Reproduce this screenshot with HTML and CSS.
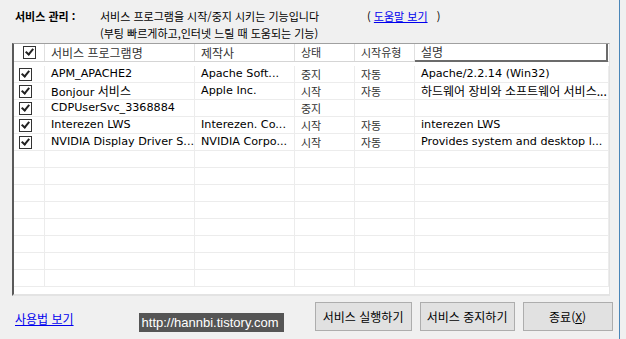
FILE: index.html
```html
<!DOCTYPE html>
<html lang="ko">
<head>
  <meta charset="UTF-8" />
  <title>서비스 관리</title>
  <link rel="stylesheet" href="styles.css">
</head>
<body>
  <div class="app">
    <div class="intro">
      <div class="title">서비스 관리 :</div>
      <div class="desc">
        <div class="desc-line">
          <span>서비스 프로그램을 시작/중지 시키는 기능입니다</span>
          <span class="help">( <a href="#">도움말 보기</a> &nbsp;&nbsp;)</span>
        </div>
        <div class="desc-line">(부팅 빠르게하고,인터넷 느릴 때 도움되는 기능)</div>
      </div>
    </div>

    <div class="list">
      <div class="list-head">
        <div class="cell c-check"><span class="box on"></span></div>
        <div class="cell c-name">서비스 프로그램명</div>
        <div class="cell c-maker">제작사</div>
        <div class="cell c-state">상태</div>
        <div class="cell c-type">시작유형</div>
        <div class="cell c-desc">설명</div>
      </div>
      <div class="list-body">
        <div class="row">
          <div class="cell c-check"><span class="box on"></span></div>
          <div class="cell c-name">APM_APACHE2</div>
          <div class="cell c-maker">Apache Soft...</div>
          <div class="cell c-state">중지</div>
          <div class="cell c-type">자동</div>
          <div class="cell c-desc">Apache/2.2.14 (Win32)</div>
        </div>
        <div class="row">
          <div class="cell c-check"><span class="box on"></span></div>
          <div class="cell c-name">Bonjour <span class="ko">서비스</span></div>
          <div class="cell c-maker">Apple Inc.</div>
          <div class="cell c-state">시작</div>
          <div class="cell c-type">자동</div>
          <div class="cell c-desc ko">하드웨어 장비와 소프트웨어 서비스...</div>
        </div>
        <div class="row">
          <div class="cell c-check"><span class="box on"></span></div>
          <div class="cell c-name">CDPUserSvc_3368884</div>
          <div class="cell c-maker"></div>
          <div class="cell c-state">중지</div>
          <div class="cell c-type"></div>
          <div class="cell c-desc"></div>
        </div>
        <div class="row">
          <div class="cell c-check"><span class="box on"></span></div>
          <div class="cell c-name">Interezen LWS</div>
          <div class="cell c-maker">Interezen. Co...</div>
          <div class="cell c-state">시작</div>
          <div class="cell c-type">자동</div>
          <div class="cell c-desc">interezen LWS</div>
        </div>
        <div class="row">
          <div class="cell c-check"><span class="box on"></span></div>
          <div class="cell c-name">NVIDIA Display Driver S...</div>
          <div class="cell c-maker">NVIDIA Corpo...</div>
          <div class="cell c-state">시작</div>
          <div class="cell c-type">자동</div>
          <div class="cell c-desc">Provides system and desktop l...</div>
        </div>
        <div class="row"><div class="cell c-check"></div><div class="cell c-name"></div><div class="cell c-maker"></div><div class="cell c-state"></div><div class="cell c-type"></div><div class="cell c-desc"></div></div>
        <div class="row"><div class="cell c-check"></div><div class="cell c-name"></div><div class="cell c-maker"></div><div class="cell c-state"></div><div class="cell c-type"></div><div class="cell c-desc"></div></div>
        <div class="row"><div class="cell c-check"></div><div class="cell c-name"></div><div class="cell c-maker"></div><div class="cell c-state"></div><div class="cell c-type"></div><div class="cell c-desc"></div></div>
        <div class="row"><div class="cell c-check"></div><div class="cell c-name"></div><div class="cell c-maker"></div><div class="cell c-state"></div><div class="cell c-type"></div><div class="cell c-desc"></div></div>
        <div class="row"><div class="cell c-check"></div><div class="cell c-name"></div><div class="cell c-maker"></div><div class="cell c-state"></div><div class="cell c-type"></div><div class="cell c-desc"></div></div>
        <div class="row"><div class="cell c-check"></div><div class="cell c-name"></div><div class="cell c-maker"></div><div class="cell c-state"></div><div class="cell c-type"></div><div class="cell c-desc"></div></div>
        <div class="row"><div class="cell c-check"></div><div class="cell c-name"></div><div class="cell c-maker"></div><div class="cell c-state"></div><div class="cell c-type"></div><div class="cell c-desc"></div></div>
        <div class="row"><div class="cell c-check"></div><div class="cell c-name"></div><div class="cell c-maker"></div><div class="cell c-state"></div><div class="cell c-type"></div><div class="cell c-desc"></div></div>
      </div>
    </div>

    <div class="footer">
      <a href="#" class="usage">사용법 보기</a>
      <span class="url">http://hannbi.tistory.com</span>
      <div class="actions">
        <button class="btn btn-run">서비스 실행하기</button>
        <button class="btn btn-stop">서비스 중지하기</button>
        <button class="btn btn-exit">종료(<u>X</u>)</button>
      </div>
    </div>
  </div>
</body>
</html>
```
FILE: styles.css
```css
body {
  margin: 0;
  background: #f0f0f0;
  font-family: "DejaVu Sans", "Noto Sans CJK KR", sans-serif;
  font-size: 11.2px;
  color: #000;
}

.app {
  width: 619px;
  height: 339px;
  border-right: 1px solid #4a86b8;
  overflow: hidden;
}

.ko {
  font-family: "Noto Sans CJK KR", sans-serif;
  font-size: 12px;
}

.intro {
  display: flex;
  padding: 8px 0 0 15px;
  height: 35px;
  font-family: "Noto Sans CJK KR", sans-serif;
  font-size: 11px;
}

.title {
  width: 85px;
  font-weight: bold;
  line-height: 17px;
}

.desc-line {
  line-height: 17px;
  display: flex;
}

.help {
  margin-left: 48px;
}

.help a {
  color: #0000ee;
}

/* list view */
.list {
  margin-left: 12px;
  width: 595px;
  height: 250px;
  background: #fff;
  border-left: 2px solid #5a5a5a;
  border-top: 1px solid #a0a0a0;
  border-right: 1px solid #e3e3e3;
  border-bottom: 2px solid #e3e3e3;
  overflow: hidden;
}

.list-head {
  display: flex;
  height: 17px;
  border-bottom: 1px solid #d5d5d5;
  margin-bottom: 4px;
  font-family: "Noto Sans CJK KR", sans-serif;
  font-size: 12px;
  color: #333;
}

.list-head .cell {
  border-right: 1px solid #e0e0e0;
  line-height: 17px;
}

.list-head .c-desc {
  width: 193px;
  border-right: 2px solid #6b6b6b;
  border-bottom: 2px solid #6b6b6b;
  height: 18px;
  line-height: 16px;
}

.row {
  display: flex;
  height: 16px;
  border-bottom: 1px solid #ececec;
}

.row .cell {
  border-right: 1px solid #ececec;
}

.cell {
  box-sizing: border-box;
  padding-left: 6px;
  line-height: 16px;
  white-space: nowrap;
  overflow: hidden;
}

.c-check {
  width: 31px;
  padding-left: 5px;
  display: flex;
  align-items: center;
}

.c-name { width: 150px; }
.c-maker { width: 100px; }
.c-state { width: 60px; }
.c-type { width: 60px; }
.c-desc { width: 194px; }

.c-state,
.c-type {
  font-family: "Noto Sans CJK KR", sans-serif;
  font-size: 11px;
  color: #333;
}

.box {
  width: 11px;
  height: 11px;
  border: 1px solid #333;
  background: #fff;
  position: relative;
}

.box.on::after {
  content: "";
  position: absolute;
  left: 3px;
  top: 0px;
  width: 3px;
  height: 6px;
  border-right: 2px solid #222;
  border-bottom: 2px solid #222;
  transform: rotate(40deg);
}

.list-head .c-check {
  padding-left: 9px;
}

/* footer */
.footer {
  display: flex;
  align-items: center;
  height: 40px;
  padding-left: 15px;
}

.usage {
  color: #0000ee;
  font-family: "Noto Sans CJK KR", sans-serif;
  font-size: 12px;
  margin-top: 4px;
}

.url {
  background: #555;
  color: #fff;
  font-family: "Liberation Sans", sans-serif;
  font-size: 13px;
  padding: 2px 5px 2px 3px;
  margin: 13px 0 0 65px;
}

.actions {
  display: flex;
  gap: 8px;
  margin-left: 31px;
  margin-top: 0;
}

.btn {
  height: 29px;
  border: 1px solid #adadad;
  background: #e1e1e1;
  font-family: "Noto Sans CJK KR", sans-serif;
  font-size: 12px;
  color: #000;
  padding: 0;
}

.btn-run { width: 97px; }
.btn-stop { width: 95px; }
.btn-exit { width: 90px; }
```
